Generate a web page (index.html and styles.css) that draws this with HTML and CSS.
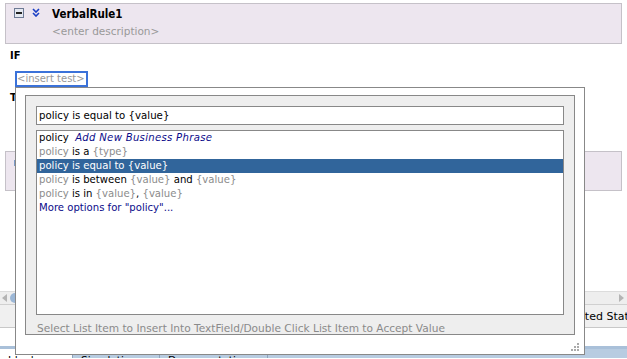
FILE: index.html
```html
<!DOCTYPE html>
<html lang="en">
<head>
    <meta charset="UTF-8">
    <title>Rules Editor</title>
    <link rel="stylesheet" href="styles.css">
</head>
<body>

<div class="editor">
    <div class="rule-head">
        <div class="rule-icons">
            <span class="collapse-btn"></span>
            <svg class="chevrons" width="8" height="9" viewBox="0 0 8 9">
                <path d="M1 1 L4 4 L7 1 M1 5 L4 8 L7 5" fill="none" stroke="#1a3fc4" stroke-width="1.6"/>
            </svg>
        </div>
        <div class="rule-text">
            <div class="rule-name">VerbalRule1</div>
            <div class="rule-desc">&lt;enter description&gt;</div>
        </div>
    </div>

    <div class="section-label">IF</div>
    <div class="insert-test">&lt;insert test&gt;</div>
    <div class="section-label then-label">THEN</div>

    <div class="rule-box"><span class="box-icon"></span></div>

    <div class="hscroll">
        <span class="arrow-left"></span>
        <span class="thumb"></span>
        <span class="arrow-right"></span>
    </div>
    <div class="status-row"><span class="status-cell">Untested Stat</span></div>

    <div class="tabs">
        <span class="tab active">Ideal</span>
        <span class="tab sim">Simulation</span>
        <span class="tab doc">Documentation</span>
        <span class="tab wide"></span>
    </div>
</div>

<!-- phrase chooser popup -->
<div class="popup">
    <div class="popup-inner">
        <div class="phrase-input">policy is equal to {value}</div>
        <ul class="phrase-list">
            <li>policy&nbsp; <em class="link">Add New Business Phrase</em></li>
            <li><span class="dim">policy</span> is a <span class="dim">{type}</span></li>
            <li class="selected">policy is equal to {value}</li>
            <li><span class="dim">policy</span> is between <span class="dim">{value}</span> and <span class="dim">{value}</span></li>
            <li><span class="dim">policy</span> is in <span class="dim">{value}</span>, <span class="dim">{value}</span></li>
            <li class="link">More options for "policy"...</li>
        </ul>
        <div class="hint">Select List Item to Insert Into TextField/Double Click List Item to Accept Value</div>
    </div>
    <svg class="grip" width="10" height="10" viewBox="0 0 10 10">
        <rect x="7" y="1" width="2" height="2" fill="#aaa"/>
        <rect x="4" y="4" width="2" height="2" fill="#aaa"/>
        <rect x="7" y="4" width="2" height="2" fill="#aaa"/>
        <rect x="1" y="7" width="2" height="2" fill="#aaa"/>
        <rect x="4" y="7" width="2" height="2" fill="#aaa"/>
        <rect x="7" y="7" width="2" height="2" fill="#aaa"/>
    </svg>
</div>

</body>
</html>
```

FILE: styles.css
```css
body {
    margin: 0;
    background: #ffffff;
    font-family: "DejaVu Sans", Verdana, sans-serif;
    font-size: 10.5px;
    color: #000;
    width: 627px;
    height: 359px;
    overflow: hidden;
    position: relative;
}

.editor {
    display: flex;
    flex-direction: column;
    height: 359px;
}

.rule-head {
    margin: 3px 5px 0 5px;
    height: 39px;
    background: #ede6ef;
    border: 1px solid #c5c1c8;
    display: flex;
}

.rule-icons {
    display: flex;
    align-items: flex-start;
    padding: 4px 0 0 8px;
    gap: 8px;
}

.collapse-btn {
    width: 8px;
    height: 8px;
    border: 1px solid #6d7a94;
    background: #e4e8f0;
    position: relative;
}

.collapse-btn::after {
    content: "";
    position: absolute;
    left: 1px;
    top: 3px;
    width: 6px;
    height: 2px;
    background: #222;
}

.rule-text {
    padding: 3px 0 0 12px;
}

.rule-name {
    font-family: "DejaVu Sans Condensed", "DejaVu Sans", sans-serif;
    font-weight: bold;
    font-size: 11.5px;
    height: 16px;
}

.rule-desc {
    color: #999;
    font-size: 10.5px;
    margin-top: 2px;
}

.section-label {
    font-family: "DejaVu Sans Condensed", "DejaVu Sans", sans-serif;
    font-weight: bold;
    font-size: 11px;
    margin: 5px 0 0 10px;
    height: 14px;
}

.insert-test {
    align-self: flex-start;
    margin: 8px 0 0 15px;
    border: 2px solid #3b72d9;
    color: #999;
    font-size: 10px;
    padding: 0 1px 0 0;
    height: 12px;
    line-height: 12px;
}

.then-label {
    margin-top: 4px;
}

.rule-box {
    margin: 46px 5px 0 5px;
    height: 38px;
    background: #ede6ef;
    border: 1px solid #c5c1c8;
    padding: 8px 0 0 8px;
    box-sizing: border-box;
    height: 40px;
}

.box-icon {
    display: block;
    width: 3px;
    height: 6px;
    background: #7d9cc8;
}

.hscroll {
    margin-top: 100px;
    height: 12px;
    background: #eeeeee;
    border-top: 1px solid #dcdcdc;
    display: flex;
    align-items: center;
}

.arrow-left {
    width: 0;
    height: 0;
    margin-left: 2px;
    border-top: 4px solid transparent;
    border-bottom: 4px solid transparent;
    border-right: 5px solid #b4b4b4;
}

.thumb {
    width: 12px;
    height: 10px;
    margin-left: 3px;
    border-radius: 5px;
    background: #9cb7d6;
}

.arrow-right {
    width: 0;
    height: 0;
    margin-left: auto;
    margin-right: 3px;
    border-top: 4px solid transparent;
    border-bottom: 4px solid transparent;
    border-left: 5px solid #b4b4b4;
}

.status-row {
    height: 22px;
    background: #f0f0f0;
    border-top: 1px solid #d0d0d0;
    border-bottom: 1px solid #c8c8c8;
    display: flex;
    align-items: center;
    overflow: hidden;
    font-size: 11px;
}

.status-cell {
    white-space: nowrap;
    margin-left: 553px;
}

.tabs {
    margin-top: 18px;
    height: 9px;
    border-top: 3px solid #a9c0d9;
    background: #b8cce1;
    display: flex;
    overflow: hidden;
}

.tab {
    padding: 4px 0 0 8px;
    border-right: 1px solid #8ea3bb;
    width: 80px;
    line-height: 14px;
}

.tab.active {
    background: #fff;
    width: 64px;
}

.tab.sim {
    width: 78px;
}

.tab.doc {
    width: 99px;
}

.tab.wide {
    flex: 1;
    border-right: none;
}

/* popup */
.popup {
    position: absolute;
    left: 15px;
    top: 87px;
    width: 550px;
    height: 250px;
    padding: 7px 9px 9px 9px;
    background: #fff;
    border: 1px solid #888;
}

.popup-inner {
    height: 228px;
    border: 1px solid #888;
    background: #eeeeee;
    padding: 10px 10px 0 10px;
}

.phrase-input {
    height: 17px;
    line-height: 17px;
    border: 1px solid #888;
    background: #fff;
    padding-left: 2px;
    font-size: 10.2px;
}

.phrase-list {
    list-style: none;
    margin: 5px 0 0 0;
    padding: 0;
    height: 183px;
    border: 1px solid #888;
    background: #fff;
    font-size: 10.1px;
}

.phrase-list li {
    height: 14px;
    line-height: 14px;
    padding-left: 2px;
    white-space: nowrap;
}

.phrase-list li.selected {
    background: #31659b;
    color: #fff;
}

.phrase-list em.link {
    letter-spacing: 0.3px;
}

.dim {
    color: #8c8c8c;
}

.link {
    color: #0b0b8a;
}

.hint {
    color: #8a8a8a;
    font-size: 10.6px;
    margin-top: 7px;
    padding-left: 1px;
}

.grip {
    position: absolute;
    right: 4px;
    bottom: 2px;
}
```
